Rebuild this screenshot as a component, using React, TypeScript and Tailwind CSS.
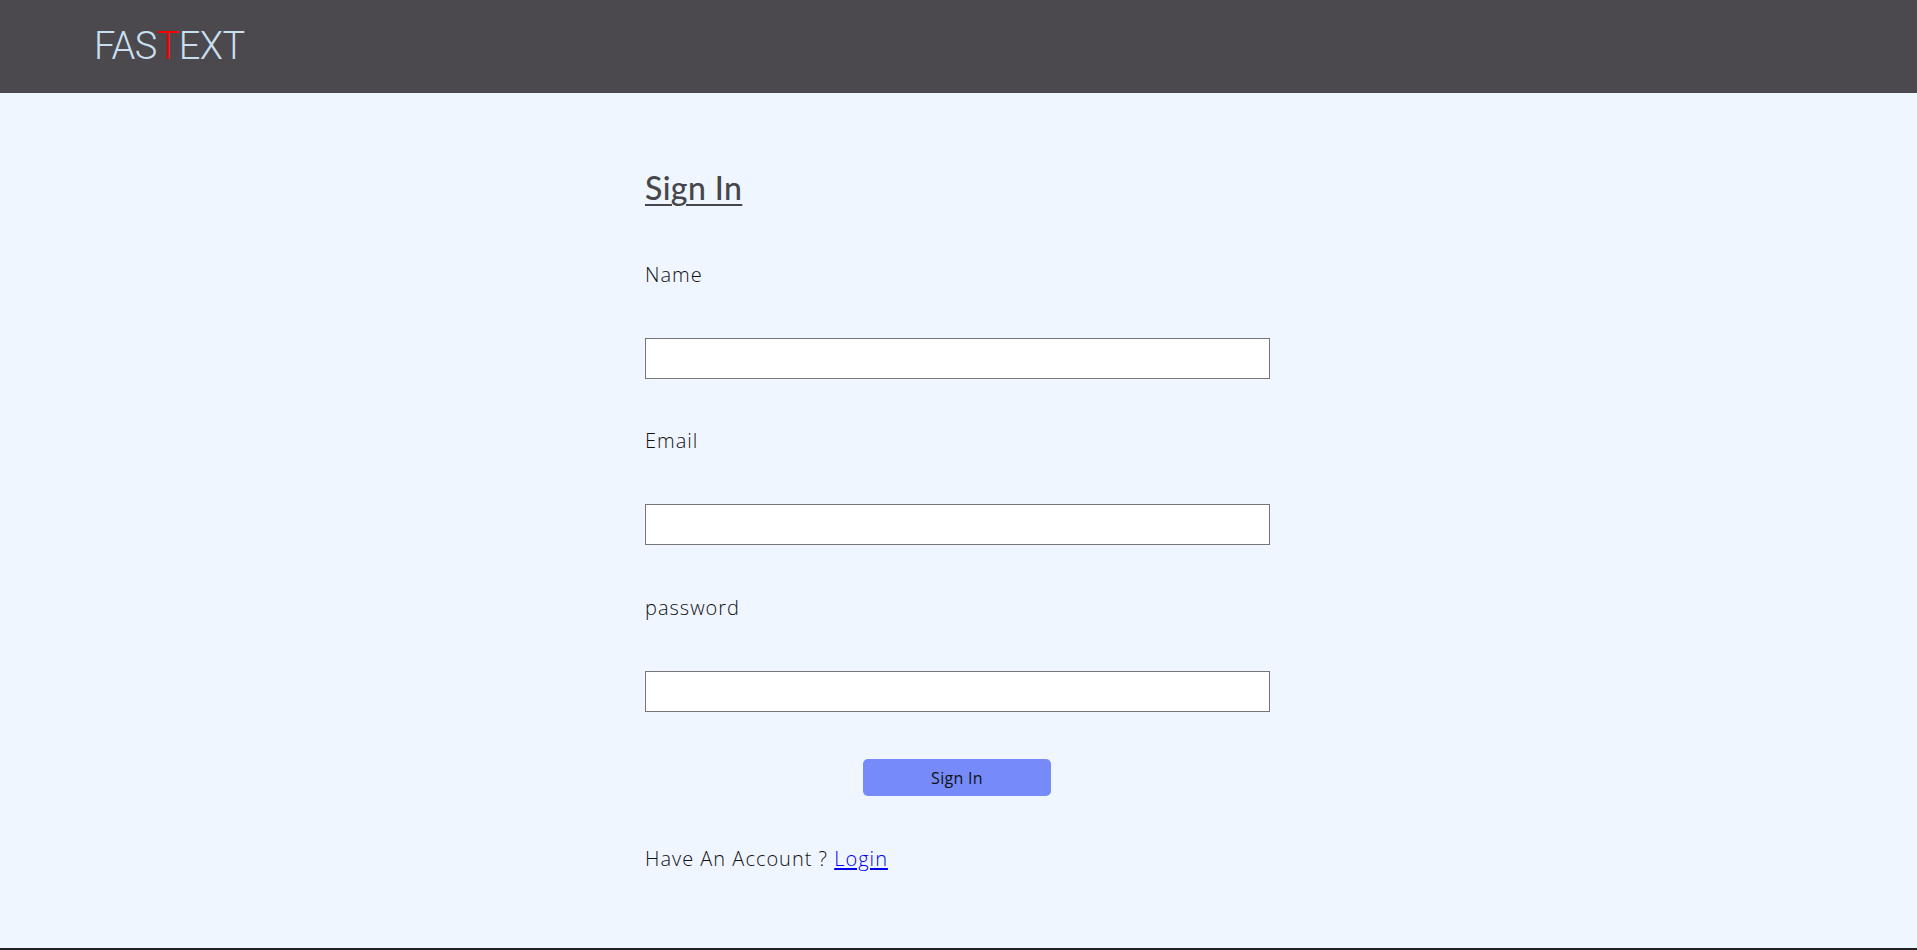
import React from "react";

export default function App() {
  return (
    <div className="flex h-[950px] w-full flex-col bg-[#eff6ff]" style={{ fontFamily: "'Open Sans', Lato, sans-serif" }}>
      <header className="flex h-[93px] shrink-0 items-center bg-[#4b494d] pl-[94px]">
        <div className="-mt-[2px] font-['Roboto',sans-serif] text-[38px] font-light leading-none tracking-[-0.6px] text-[#c8dff0]">
          FAS<span className="text-[#ff0000]">T</span>EXT
        </div>
      </header>
      <main className="flex-1">
        <form className="mx-auto flex w-[627px] flex-col gap-[47.75px] pt-[71px]" onSubmit={(e) => e.preventDefault()}>
          <h1 className="h-[48px] font-['Lato',sans-serif] text-[32px] font-medium leading-[48px] tracking-[0.4px] text-[#47464b] underline decoration-2 underline-offset-[4px]">
            Sign In
          </h1>
          <label className="h-[30px] text-[20px] font-light leading-[30px] tracking-[1px] text-[#111]" htmlFor="name">
            Name
          </label>
          <input id="name" type="text" className="h-[41px] w-[625px] border border-[#767676] bg-white" />
          <label className="h-[30px] text-[20px] font-light leading-[30px] tracking-[1px] text-[#111]" htmlFor="email">
            Email
          </label>
          <input id="email" type="email" className="h-[41px] w-[625px] border border-[#767676] bg-white" />
          <label className="h-[30px] text-[20px] font-light leading-[30px] tracking-[1px] text-[#111]" htmlFor="password">
            password
          </label>
          <input id="password" type="password" className="h-[41px] w-[625px] border border-[#767676] bg-white" />
          <button
            type="submit"
            className="ml-[218px] h-[37px] w-[188px] self-start rounded-[5px] bg-[#768bf9] text-[16px] font-normal leading-none tracking-[0.3px] text-[#111]"
          >
            Sign In
          </button>
          <p className="h-[30px] text-[20px] font-light leading-[30px] tracking-[1px] text-[#111]">
            Have An Account ? <a href="#" className="text-[#0000ee] underline underline-offset-2">Login</a>
          </p>
        </form>
      </main>
      <div className="h-[2px] shrink-0 bg-[#222]" />
    </div>
  );
}
